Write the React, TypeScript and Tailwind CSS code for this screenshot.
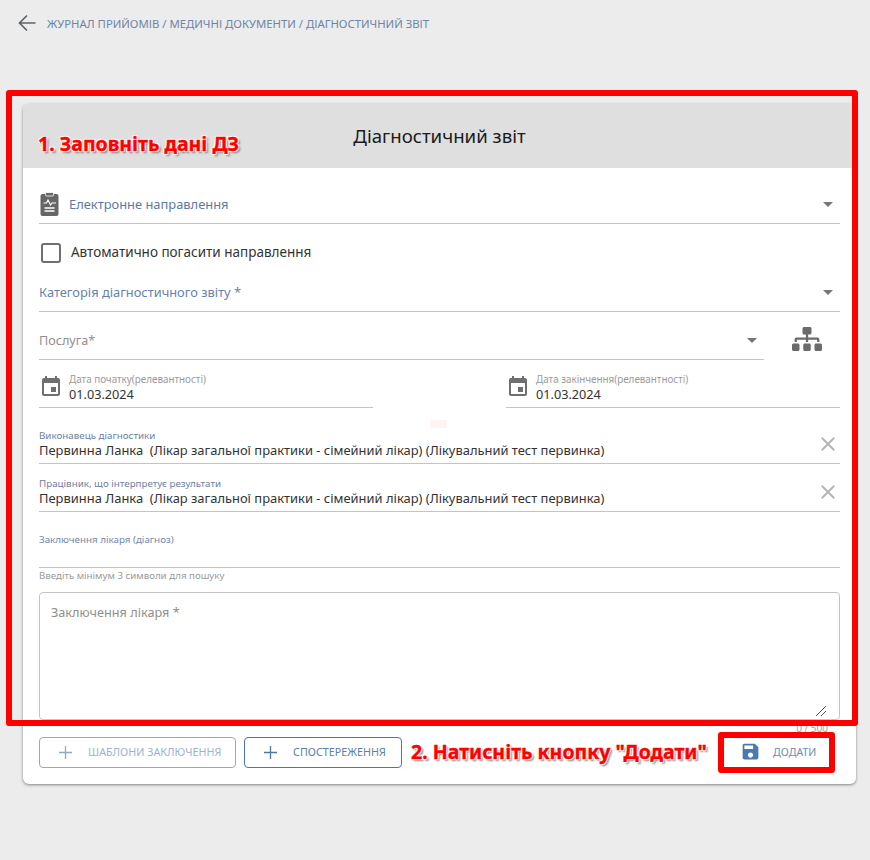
import React from 'react';
import { FaSitemap } from 'react-icons/fa';

const eventPath = 'M17 12h-5v5h5v-5zM16 1v2H8V1H6v2H5c-1.11 0-1.99.9-1.99 2L3 19c0 1.1.89 2 2 2h14c1.1 0 2-.9 2-2V5c0-1.1-.9-2-2-2h-1V1h-2zm3 18H5V8h14v11z';
const closePath = 'M19 6.41L17.59 5 12 10.59 6.41 5 5 6.41 10.59 12 5 17.59 6.41 19 12 13.41 17.59 19 19 17.59 13.41 12z';
const savePath = 'M17 3H5c-1.11 0-2 .9-2 2v14c0 1.1.89 2 2 2h14c1.1 0 2-.9 2-2V7l-4-4zm-5 16c-1.66 0-3-1.34-3-3s1.34-3 3-3 3 1.34 3 3-1.34 3-3 3zm3-10H5V5h10v4z';
const doctor = 'Первинна Ланка  (Лікар загальної практики - сімейний лікар) (Лікувальний тест первинка)';

const Caret = () => <span className="w-0 h-0 border-x-[5px] border-x-transparent border-t-[5px] border-t-[#757575]" />;

const DateField = ({ label }: { label: string }) => (
  <div className="w-[334px] h-12 flex border-b border-[#c4c4c4]">
    <svg viewBox="0 0 24 24" className="w-6 h-6 mt-[15px] mr-[6px] fill-[#6f6f6f]"><path d={eventPath} /></svg>
    <div className="pt-[12px]">
      <p className="text-[9.85px] leading-[14px] text-[#9a9a9a]">{label}</p>
      <p className="text-[12.7px] leading-[17px] text-[#333]">01.03.2024</p>
    </div>
  </div>
);

const PersonField = ({ label, height }: { label: string; height: string }) => (
  <div className={`${height} flex items-end justify-between border-b border-[#c4c4c4]`}>
    <div className="pb-[5px]">
      <p className="text-[9.8px] leading-[14px] text-[#6f7fa0]">{label}</p>
      <p className="text-[12.93px] leading-[15px] text-[#333] whitespace-pre">{doctor}</p>
    </div>
    <svg viewBox="0 0 24 24" className="w-6 h-6 mb-[7px] fill-[#b5b5b5]"><path d={closePath} /></svg>
  </div>
);

const OutlineButton = ({ label, faded, width }: { label: string; faded?: boolean; width: string }) => (
  <button className={`${width} h-[31px] flex items-center pl-[19px] rounded border text-[10.75px] whitespace-nowrap ${faded ? 'border-[#8fa9c9] text-[#9db2cd]' : 'border-[#4a76a8] text-[#5b80a8]'}`}>
    <svg viewBox="0 0 13 13" className={`w-[13px] h-[13px] mr-[16px] ${faded ? 'stroke-[#8fa9c9]' : 'stroke-[#4a76a8]'}`} strokeWidth="1.3"><path d="M6.5 0v13M0 6.500h13" /></svg>
    {label}
  </button>
);

const App: React.FC = () => {
  return (
    <div className="relative w-[870px] h-[860px] overflow-hidden bg-[#ececec] font-['Noto_Sans','Open_Sans',sans-serif]">
      <div className="h-[104px] pl-[18px] pt-[14px] flex items-start">
        <svg viewBox="0 0 18 18" className="w-[18px] h-[18px] mr-[11px] fill-none stroke-[#5f6368]" strokeWidth="1.7"><path d="M17.5 9H2M9 1.5 1.5 9 9 16.5" /></svg>
        <p className="text-[11.33px] leading-[20px] text-[#6d86a8]">ЖУРНАЛ ПРИЙОМІВ / МЕДИЧНІ ДОКУМЕНТИ / ДІАГНОСТИЧНИЙ ЗВІТ</p>
      </div>

      <div className="ml-[23px] w-[833px] h-[680px] bg-white rounded-md shadow-[0_1px_3px_rgba(0,0,0,0.45)] overflow-hidden">
        <div className="h-16 bg-[#dfdfdf] flex items-center justify-center">
          <h1 className="text-[18.65px] text-[#1b1b1b]">Діагностичний звіт</h1>
        </div>

        <div className="pl-4 pr-4">
          <div className="h-14 flex items-center border-b border-[#c4c4c4] pt-5 pb-[3px]">
            <svg viewBox="0 0 20 25" className="w-5 h-[25px] mr-[9px] ml-[1px]">
              <rect x="0.5" y="2" width="18" height="22" rx="2" fill="#666" />
              <rect x="5.5" y="0.5" width="8" height="3.5" rx="1" fill="#666" stroke="#fff" strokeWidth="0.8" />
              <path d="M3.5 11h3l1.5-3 2.500 5 1.500-2h4" fill="none" stroke="#fff" strokeWidth="1.1" />
              <path d="M4.500 16h10M4.500 19h10" stroke="#fff" strokeWidth="1.300" />
            </svg>
            <span className="text-[12.9px] mt-[2px] text-[#5b7ba3] flex-1">Електронне направлення</span>
            <span className="mr-[7px] flex"><Caret /></span>
          </div>

          <div className="h-14 flex items-center pt-[1px]">
            <span className="ml-[2px] w-5 h-5 border-2 border-[#6f6f6f] rounded-[3px] mr-[10px]" />
            <span className="text-[13.5px] text-[#333]">Автоматично погасити направлення</span>
          </div>

          <div className="h-8 flex items-center justify-between border-b border-[#c4c4c4] pb-[6px]">
            <span className="text-[12.87px] text-[#6583a8]">Категорія діагностичного звіту *</span>
            <span className="mr-[7px] flex"><Caret /></span>
          </div>

          <div className="flex">
            <div className="w-[725px] h-12 flex items-center justify-between border-b border-[#c4c4c4] pt-[10px]">
              <span className="text-[12.6px] mt-[2px] text-[#8f8f8f]">Послуга*</span>
              <span className="mr-[7px] flex"><Caret /></span>
            </div>
            <FaSitemap className="ml-[28px] mt-[12px] w-[30px] h-[30px] text-[#6b6b6b]" />
          </div>

          <div className="flex justify-between">
            <DateField label="Дата початку(релевантності)" />
            <DateField label="Дата закінчення(релевантності)" />
          </div>

          <PersonField label="Виконавець діагностики" height="h-14" />
          <PersonField label="Працівник, що інтерпретує результати" height="h-12" />

          <div className="h-14 pt-[21px] border-b border-[#c4c4c4]">
            <p className="text-[9.8px] leading-[14px] text-[#6f8aa8]">Заключення лікаря (діагноз)</p>
          </div>
          <p className="h-4 text-[9.7px] leading-4 text-[#9a9a9a]">Введіть мінімум 3 символи для пошуку</p>

          <div className="relative mt-2 h-[128px] border border-[#c4c4c4] rounded pl-[11px] pt-[9px]">
            <p className="text-[12.7px] leading-5 text-[#8f8f8f]">Заключення лікаря *</p>
            <svg viewBox="0 0 12 12" className="absolute right-[12px] bottom-[2px] w-3 h-3 stroke-[#555]" strokeWidth="1"><path d="M1 11 11 1M6 11l5-5" /></svg>
          </div>
          <p className="h-4 pr-3 text-right text-[10px] leading-4 text-[#a5a5a5]">0 / 500</p>

          <div className="flex gap-2 items-center h-[31px] mt-[1px]">
            <OutlineButton label="ШАБЛОНИ ЗАКЛЮЧЕННЯ" faded width="w-[197px]" />
            <OutlineButton label="СПОСТЕРЕЖЕННЯ" width="w-[158px]" />
            <button className="ml-auto mr-[10px] w-[106px] h-[31px] flex items-center pl-4 rounded text-[10.6px] text-[#6d8cb0]">
              <svg viewBox="0 0 24 24" className="w-[21px] h-[21px] mr-3 mb-[3px] fill-[#4a7bb0]"><path d={savePath} /></svg>
              ДОДАТИ
            </button>
          </div>
        </div>
      </div>

      {/* annotations drawn over the screenshot */}
      <span className="absolute left-[430px] top-[420px] w-[17px] h-2 bg-[#fff3f3]" />
      <div className="absolute left-[6px] top-[90px] w-[852px] h-[636px] border-[6px] border-[#ff0000] rounded-[3px]" />
      <div className="absolute left-[718px] top-[732px] w-[117px] h-[41px] border-[6px] border-[#ff0000] rounded-[3px]" />
      <p className="absolute left-[38px] top-[130px] text-[19.5px] leading-7 font-bold text-[#ff0000] [-webkit-text-stroke:0.4px_#ff0000] [text-shadow:1px_1px_1px_#fff,-1px_-1px_1px_#fff,1px_-1px_1px_#fff,-1px_1px_1px_#fff,2px_2px_2px_#777]">1. Заповніть дані ДЗ</p>
      <p className="absolute left-[411px] top-[738px] text-[19.5px] leading-7 font-bold text-[#ff0000] [-webkit-text-stroke:0.4px_#ff0000] [text-shadow:1px_1px_1px_#fff,-1px_-1px_1px_#fff,1px_-1px_1px_#fff,-1px_1px_1px_#fff,2px_2px_2px_#777]">2. Натисніть кнопку "Додати"</p>
    </div>
  );
};

export default App;
